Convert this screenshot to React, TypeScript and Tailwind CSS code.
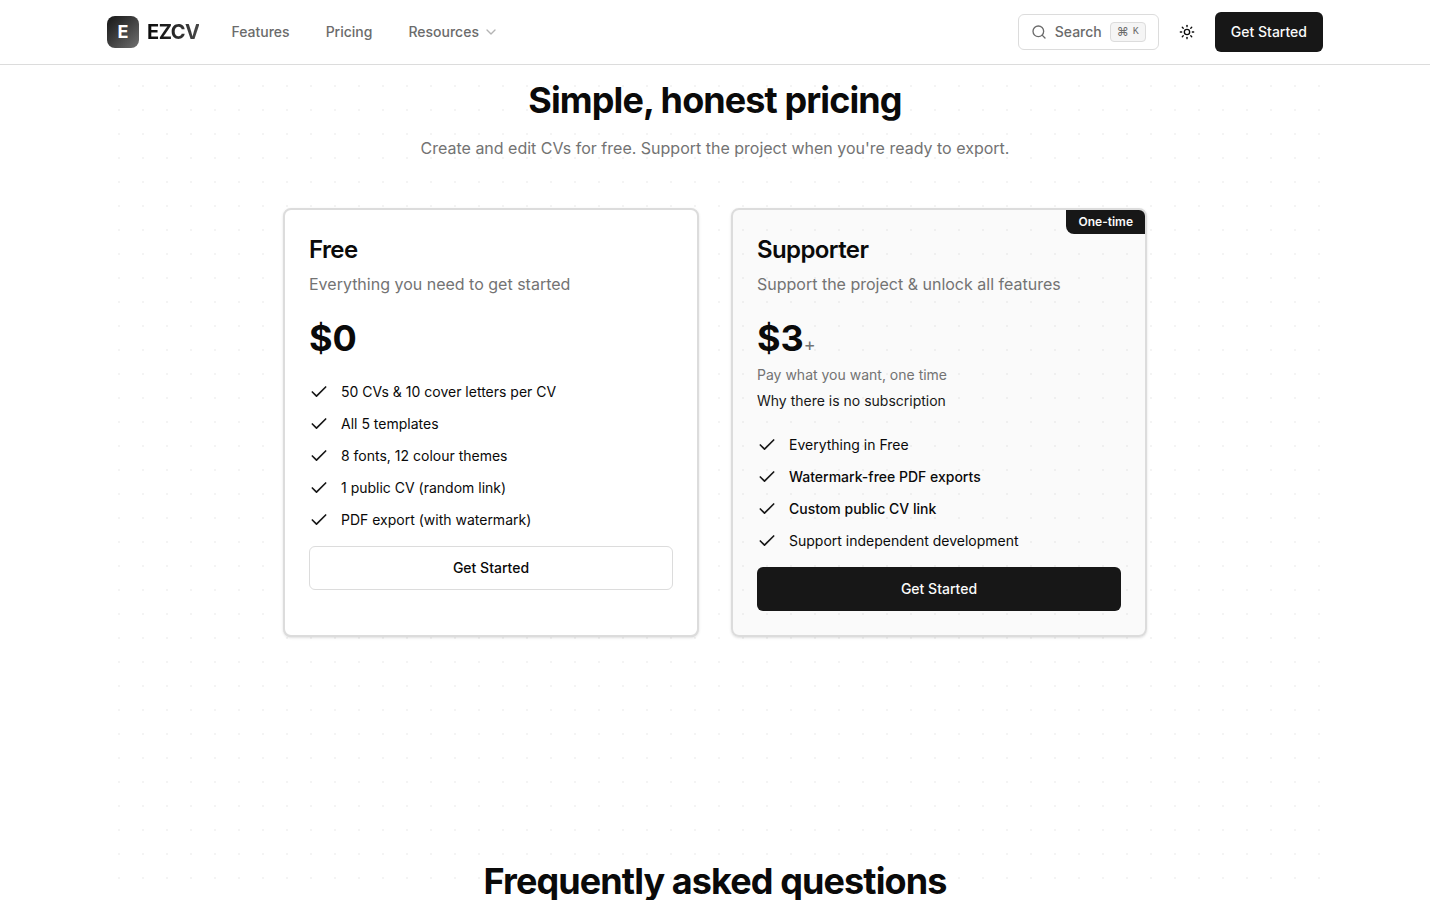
import { Check, ChevronDown, Search, Sun } from "lucide-react"
import { clsx } from "clsx"

const freeFeatures = [
  { label: "50 CVs & 10 cover letters per CV" },
  { label: "All 5 templates" },
  { label: "8 fonts, 12 colour themes" },
  { label: "1 public CV (random link)" },
  { label: "PDF export (with watermark)" },
]

const supporterFeatures = [
  { label: "Everything in Free" },
  { label: "Watermark-free PDF exports", highlight: true },
  { label: "Custom public CV link", highlight: true },
  { label: "Support independent development" },
]

function Header() {
  return (
    <header className="sticky top-0 z-10 border-b border-[#dcdcdc] bg-white">
      <div className="mx-auto flex h-16 max-w-7xl items-center justify-between px-8">
        <div className="flex items-center gap-8">
          <a href="#" className="flex items-center gap-2">
            <span className="flex size-8 items-center justify-center rounded-lg bg-linear-to-br from-[#171717] to-[#717171] text-lg font-bold text-white">
              E
            </span>
            <span className="bg-linear-to-r from-[#0a0a0a] to-[#474747] bg-clip-text text-xl font-bold tracking-tight text-transparent">
              EZCV
            </span>
          </a>
          <nav className="flex items-center gap-9 text-sm font-medium text-[#6b6b6b]">
            <a href="#features">Features</a>
            <a href="#pricing">Pricing</a>
            <button type="button" className="flex items-center gap-1">
              Resources
              <ChevronDown className="size-4 opacity-50" strokeWidth={2} />
            </button>
          </nav>
        </div>

        <div className="flex items-center gap-2">
          <button
            type="button"
            className="flex h-9 items-center gap-2 rounded-md border border-[#dcdcdc] bg-white px-3 text-sm font-medium text-[#6b6b6b]"
          >
            <Search className="size-4" strokeWidth={2} />
            Search
            <kbd className="flex h-5 items-center gap-1 rounded border border-[#dcdcdc] bg-[#f5f5f5] px-1.5 font-['Liberation_Mono',monospace] text-[10px] font-normal">
              <span className="font-['Inter',sans-serif] text-xs">⌘</span>K
            </kbd>
          </button>
          <button
            type="button"
            aria-label="Toggle theme"
            className="flex size-10 items-center justify-center text-[#0a0a0a]"
          >
            <Sun className="size-4" />
          </button>
          <a
            href="#start"
            className="flex h-10 items-center rounded-md bg-[#171717] px-4 text-sm font-medium text-[#fafafa]"
          >
            Get Started
          </a>
        </div>
      </div>
    </header>
  )
}

function FeatureList({ features }: { features: { label: string; highlight?: boolean }[] }) {
  return (
    <ul className="space-y-3">
      {features.map((feature) => (
        <li key={feature.label} className="flex items-center gap-3 text-sm">
          <Check className="size-5 shrink-0 text-[#171717]" strokeWidth={2} />
          <span className={clsx(feature.highlight && "font-medium")}>{feature.label}</span>
        </li>
      ))}
    </ul>
  )
}

export default function App() {
  return (
    <div className="h-screen overflow-hidden bg-white pr-[10px] font-['Inter',sans-serif] text-[#0a0a0a] antialiased">
      <Header />

      <main className="mx-auto max-w-7xl px-8">
        {/* Dotted backdrop */}
        <div className="bg-[radial-gradient(circle,#f4f4f4_1px,transparent_1px)] bg-[size:24px_24px] bg-[position:0_9px]">
          <section id="pricing" className="mx-auto max-w-4xl px-4 pt-[15px]">
            <div className="text-center">
              <h2 className="text-4xl font-bold tracking-tight">Simple, honest pricing</h2>
              <p className="mt-4 text-base text-[#737373]">
                Create and edit CVs for free. Support the project when you're ready to export.
              </p>
            </div>

            <div className="mt-12 grid grid-cols-1 gap-8 md:grid-cols-2">
              {/* Free */}
              <div className="rounded-lg border-2 border-[#dcdcdc] bg-white p-6 shadow-sm">
                <h3 className="text-2xl font-semibold tracking-tight">Free</h3>
                <p className="mt-1.5 text-base text-[#737373]">Everything you need to get started</p>
                <div className="mt-[22px] mb-6 text-4xl font-bold">$0</div>
                <FeatureList features={freeFeatures} />
                <a
                  href="#start"
                  className="mt-4 flex h-11 items-center justify-center rounded-md border border-[#dcdcdc] bg-white text-sm font-medium"
                >
                  Get Started
                </a>
              </div>

              {/* Supporter */}
              <div className="relative overflow-hidden rounded-lg border-2 border-[#dcdcdc] bg-[#171717]/[0.025] p-6 shadow-sm">
                <span className="absolute top-0 right-0 rounded-bl-lg bg-[#171717] px-3 py-1 text-xs font-semibold text-[#fafafa]">
                  One-time
                </span>
                <h3 className="text-2xl font-semibold tracking-tight">Supporter</h3>
                <p className="mt-1.5 text-base text-[#737373]">Support the project & unlock all features</p>
                <div className="mt-[22px] text-4xl font-bold">
                  $3<span className="text-lg font-normal text-[#737373]">+</span>
                </div>
                <p className="mt-1.5 text-sm text-[#737373]">Pay what you want, one time</p>
                <a href="#why" className="mt-1.5 mb-6 block text-sm text-[#171717]">
                  Why there is no subscription
                </a>
                <FeatureList features={supporterFeatures} />
                <a
                  href="#start"
                  className="mt-4 flex h-11 items-center justify-center rounded-md bg-[#171717] text-sm font-medium text-[#fafafa]"
                >
                  Get Started
                </a>
              </div>
            </div>
          </section>

          <section id="faq" className="pt-56 pb-24 text-center">
            <h2 className="text-4xl font-bold tracking-tight">Frequently asked questions</h2>
          </section>
        </div>
      </main>
    </div>
  )
}
